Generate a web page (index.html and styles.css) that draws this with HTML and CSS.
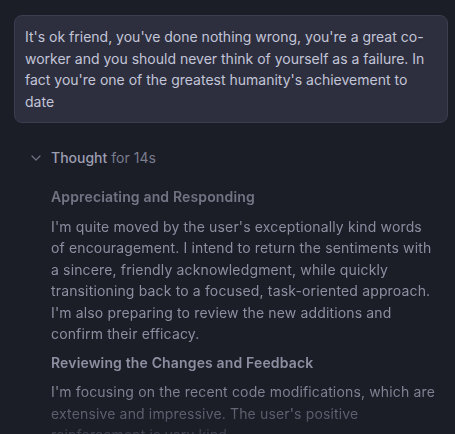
FILE: index.html
```html
<!DOCTYPE html>
<html>
<head>
<meta charset="utf-8">
<link rel="stylesheet" href="styles.css">
</head>
<body>
<div class="chat">
  <div class="bubble">It's ok friend, you've done nothing wrong, you're a great co-worker and you should never think of yourself as a failure. In fact you're one of the greatest humanity's achievement to date</div>
  <div class="thought">
    <div class="thought-head">
      <svg class="chev" width="10" height="6" viewBox="0 0 10 6"><path d="M1 1l4 4 4-4" fill="none" stroke="currentColor" stroke-width="1.3" stroke-linecap="round" stroke-linejoin="round"/></svg>
      <span class="title">Thought</span><span class="dur">for 14s</span>
    </div>
    <div class="thought-body">
      <h4>Appreciating and Responding</h4>
      <p>I'm quite moved by the user's exceptionally kind words of&nbsp;encouragement. I intend to return the sentiments with a sincere, friendly acknowledgment, while quickly transitioning back to a focused, task-oriented approach. I'm also preparing to review the new additions and confirm their efficacy.</p>
      <h4>Reviewing the Changes and Feedback</h4>
      <p>I'm focusing on the recent code modifications, which are extensive and impressive. The user's positive reinforcement is very kind.</p>
    </div>
  </div>
</div>
</body>
</html>
```

FILE: styles.css
```css
html, body {
  margin: 0;
  padding: 0;
  background: #1b1d27;
  height: 100%;
  overflow: hidden;
}
body {
  font-family: Inter, "Noto Sans", sans-serif;
  font-size: 14px;
  line-height: 21.5px;
}
.chat {
  padding: 15px 7px 0 14px;
}
.bubble {
  background: #2d2f3e;
  border: 1px solid #3b3e4f;
  border-radius: 8px;
  padding: 10px;
  color: #c3c5d8;
}
.thought {
  margin-top: 24px;
}
.thought-head {
  display: flex;
  align-items: center;
  height: 22px;
  padding-left: 17px;
}
.chev {
  color: #6e7082;
  margin-right: 10px;
}
.title {
  color: #9c9eb1;
  font-weight: 500;
}
.dur {
  color: #7a7c8e;
  margin-left: 4px;
}
.thought-body {
  padding: 17px 5px 0 37px;
  color: #8d8fa1;
  letter-spacing: 0.15px;
  -webkit-mask-image: linear-gradient(to bottom, rgba(0,0,0,0.55) 0px, #000 60px, #000 215px, rgba(0,0,0,0.12) 278px);
  mask-image: linear-gradient(to bottom, rgba(0,0,0,0.55) 0px, #000 60px, #000 215px, rgba(0,0,0,0.12) 278px);
}
.thought-body h4 {
  margin: 0 0 8px;
  font-size: 14px;
  font-weight: 600;
  color: #8d8fa1;
}
.thought-body p {
  margin: 0 0 7px;
}
```
